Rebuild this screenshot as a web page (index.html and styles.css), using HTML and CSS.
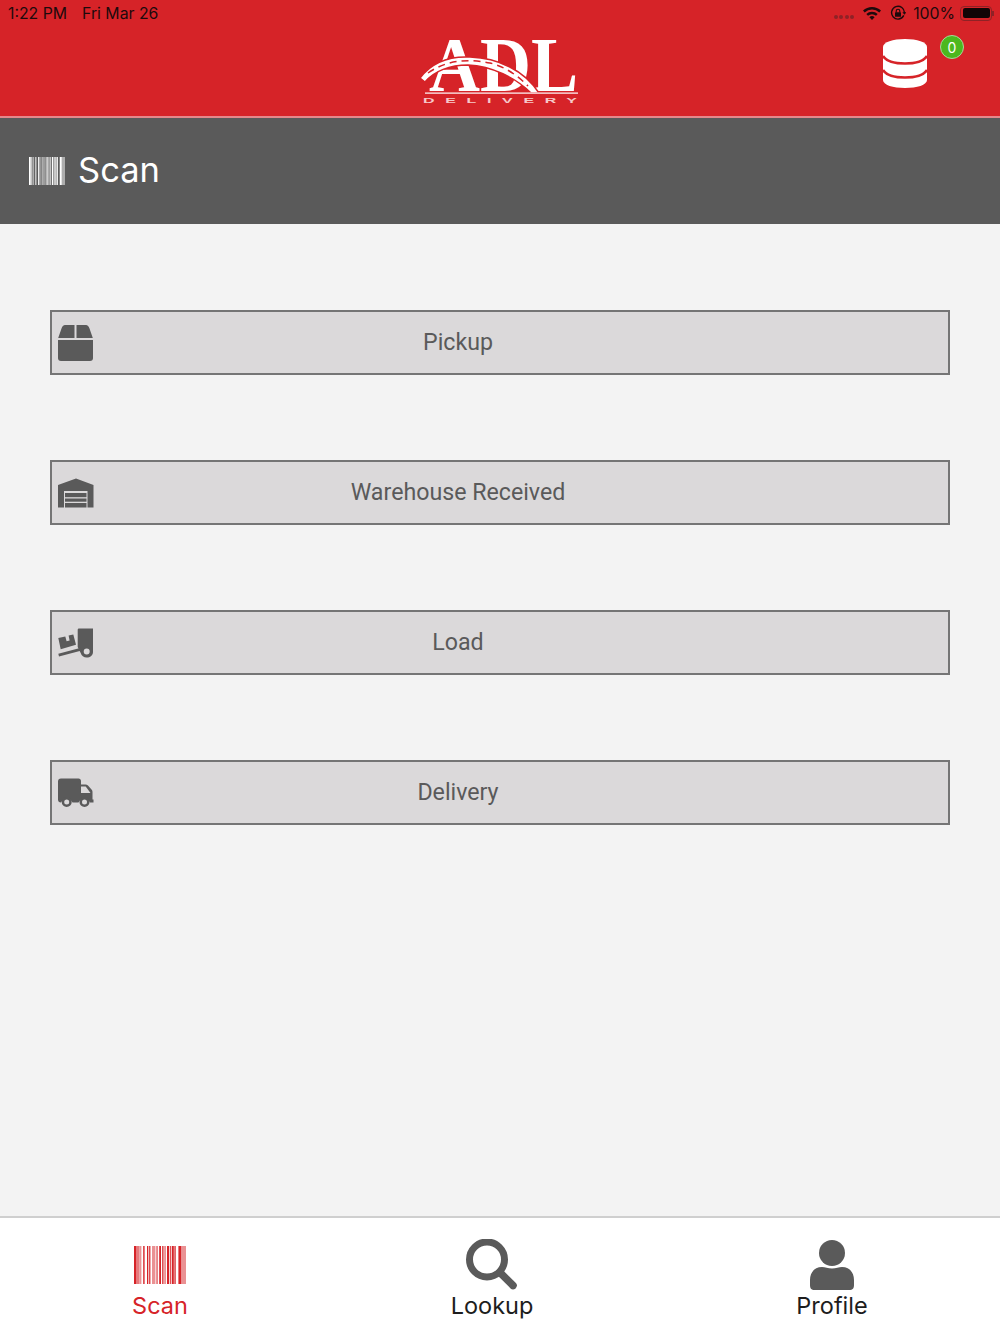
FILE: index.html
```html
<!DOCTYPE html>
<html lang="en">
<head>
    <meta charset="UTF-8">
    <meta name="viewport" content="width=device-width, initial-scale=1.0">
    <title>Scan</title>
    <link rel="stylesheet" href="styles.css">
</head>
<body>
    <svg class="defs" width="0" height="0">
        <symbol id="barcode" viewBox="0 0 52 38" preserveAspectRatio="none">
            <rect x="0" width="2.600" height="38"/>
            <rect x="3.400" width="1.200" height="38"/>
            <rect x="5.200" width="2.200" height="38" opacity=".5"/>
            <rect x="9.200" width="1.400" height="38"/>
            <rect x="13" width="1.300" height="38"/>
            <rect x="15.200" width="1.200" height="38"/>
            <rect x="18" width="3.400" height="38" opacity=".5"/>
            <rect x="22.400" width="1.300" height="38" opacity=".8"/>
            <rect x="25.200" width="1.800" height="38"/>
            <rect x="28.200" width="1.300" height="38"/>
            <rect x="30.400" width="1.300" height="38" opacity=".7"/>
            <rect x="33" width="2.200" height="38"/>
            <rect x="36" width="1.300" height="38" opacity=".8"/>
            <rect x="38" width="1.800" height="38"/>
            <rect x="40.400" width="1.300" height="38"/>
            <rect x="44.400" width="3" height="38"/>
            <rect x="47.600" width="4.400" height="38" opacity=".5"/>
        </symbol>
    </svg>

    <div class="app">
        <header class="top-bar">
            <div class="status-bar">
                <div class="status-left">
                    <span>1:22 PM</span>
                    <span>Fri Mar 26</span>
                </div>
                <div class="status-right">
                    <span class="signal-dots"><i></i><i></i><i></i><i></i></span>
                    <svg class="wifi" viewBox="0 0 18 14" width="18" height="14">
                        <path d="M0 4.600a13 13 0 0 1 18 0l-1.700 1.800a10.600 10.600 0 0 0-14.600 0z"/>
                        <path d="M3.300 8a8.300 8.300 0 0 1 11.400 0L13 9.800a5.900 5.900 0 0 0-8 0z"/>
                        <path d="M6.400 11.200a3.800 3.800 0 0 1 5.200 0L9 14z"/>
                    </svg>
                    <svg class="rotation-lock" viewBox="0 0 16 16" width="16" height="16">
                        <path d="M13.800 10.400A6.400 6.400 0 1 1 14.400 8" fill="none" stroke="#1d0a0c" stroke-width="1.400"/>
                        <path d="M12.400 7.200h4l-2 2.600z" fill="#1d0a0c"/>
                        <rect x="5" y="7.200" width="6" height="4.600" rx=".6" fill="#1d0a0c"/>
                        <path d="M6.200 7.400V6a1.800 1.800 0 0 1 3.600 0v1.400" fill="none" stroke="#1d0a0c" stroke-width="1.100"/>
                    </svg>
                    <span class="battery-pct">100%</span>
                    <span class="battery"><i></i></span>
                </div>
            </div>
            <div class="brand-row">
                <svg class="logo" viewBox="0 0 160 70" width="160" height="70">
                    <text class="logo-letters" x="9" y="55" textLength="149" lengthAdjust="spacingAndGlyphs">ADL</text>
                    <path class="road" d="M0 42C12 26 30 20 50 21C78 22 104 34 119 57L111 57C96 42 72 30 48 29C30 29 14 35 5 46Z"/>
                    <path class="road-dash" d="M8 37C28 23 50 23 70 27C86 31 98 40 108 50"/>
                    <rect class="logo-rule" x="5" y="56.500" width="153" height="1.200"/>
                    <text class="logo-sub" transform="scale(2 1)" x="1.500" y="67.500" textLength="77">DELIVERY</text>
                </svg>
                <div class="sync">
                    <svg class="db-icon" viewBox="0 0 44 49" width="44" height="49">
                        <path d="M0 8C0 3 10 0 22 0s22 3 22 8v33c0 5-10 8-22 8S0 46 0 41z"/>
                        <path class="db-line" d="M0 17c3 5 12 7.500 22 7.500S41 22 44 17"/>
                        <path class="db-line" d="M0 31c3 5 12 7.500 22 7.500S41 36 44 31"/>
                    </svg>
                    <span class="badge">0</span>
                </div>
            </div>
        </header>

        <div class="page-title">
            <svg class="title-icon" width="36" height="28"><use href="#barcode"/></svg>
            <h1>Scan</h1>
        </div>

        <main class="actions">
            <button class="action-btn">
                <svg class="action-icon" viewBox="0 0 36 36">
                    <path d="M7 0h9.500v13H0.200L3.500 3.500C4.200 1.200 5.500 0 7 0z"/>
                    <path d="M18.500 0H28c1.500 0 2.800 1.200 3.500 3.500l3.300 9.500H18.500z"/>
                    <path d="M0 15h35v18c0 2-1 3-3 3H3c-2 0-3-1-3-3z"/>
                </svg>
                <span class="action-label">Pickup</span>
            </button>
            <button class="action-btn">
                <svg class="action-icon" viewBox="0 0 36 36">
                    <path d="M0 10L18 3.500l17.500 6.500v22.500H29.500V16H6v16.500H0z"/>
                    <rect x="7" y="18" width="21.500" height="4.200"/>
                    <rect x="7" y="23.500" width="21.500" height="3.200"/>
                    <rect x="7" y="28" width="21.500" height="4.500"/>
                </svg>
                <span class="action-label">Warehouse Received</span>
            </button>
            <button class="action-btn">
                <svg class="action-icon" viewBox="0 0 36 36">
                    <path fill-rule="evenodd" d="M21 3.500h14v23.500c0 3.500-2.800 5.500-6.300 5.500c-3 0-5.200-1.800-5.900-4.200L19.700 22V5c0-1 .4-1.500 1.300-1.500zM28.700 23.500a3 3 0 1 0 0 6a3 3 0 0 0 0-6z"/>
                    <path d="M.3 28.800L23 22.800l.7 2.700L1 31.500z"/>
                    <path d="M.3 13l7-1.500 1.300 4.700 3-.7-1-5L15.300 9.500 18 19.800 2.700 24.200z"/>
                </svg>
                <span class="action-label">Load</span>
            </button>
            <button class="action-btn">
                <svg class="action-icon" viewBox="0 0 36 36">
                    <path fill-rule="evenodd" d="M3 3.500h17.500c1.500 0 2.500 1 2.500 2.500v3.500h4.500c1 0 1.800.4 2.500 1l3.500 3.900c.6.7 1 1.500 1 2.400v7.700h1v3h-3.500a6.500 6.500 0 0 0-11.500 0H14.500a6.500 6.500 0 0 0-11.500 0c-2 0-3-1-3-3V6.500c0-2 1-3 3-3zM23 11.500v6.500h9.500l-4.800-6.500z"/>
                    <path fill-rule="evenodd" d="M8.700 22a5 5 0 1 0 0 10a5 5 0 0 0 0-10zm0 2.500a2.500 2.500 0 1 1 0 5a2.500 2.500 0 0 1 0-5z"/>
                    <path fill-rule="evenodd" d="M26.500 22a5 5 0 1 0 0 10a5 5 0 0 0 0-10zm0 2.500a2.500 2.500 0 1 1 0 5a2.500 2.500 0 0 1 0-5z"/>
                </svg>
                <span class="action-label">Delivery</span>
            </button>
        </main>

        <nav class="tab-bar">
            <a class="tab tab-active">
                <svg class="tab-barcode" width="52" height="38"><use href="#barcode"/></svg>
                <span>Scan</span>
            </a>
            <a class="tab">
                <svg class="tab-icon" viewBox="0 0 52 52" width="52" height="52">
                    <circle cx="21" cy="20.500" r="17.500" fill="none" stroke="#5a5a5a" stroke-width="7"/>
                    <path d="M34 33.500l13 13" fill="none" stroke="#5a5a5a" stroke-width="7.500" stroke-linecap="round"/>
                </svg>
                <span>Lookup</span>
            </a>
            <a class="tab">
                <svg class="tab-icon" viewBox="0 0 52 52" width="52" height="52">
                    <circle cx="26" cy="14" r="13" fill="#5a5a5a"/>
                    <path d="M4 41c0-8 5-13 12-13c3 0 6 1.500 10 1.500s7-1.500 10-1.500c7 0 12 5 12 13v5c0 3-1 5-5 5H9c-4 0-5-2-5-5z" fill="#5a5a5a"/>
                </svg>
                <span>Profile</span>
            </a>
        </nav>
    </div>
</body>
</html>
```

FILE: styles.css
```css
* { box-sizing: border-box; }
html, body { height: 100%; }
body { margin: 0; font-family: Inter, Roboto, "Liberation Sans", sans-serif; background: #f3f3f3; color: #1d1d1d; }
.defs { position: absolute; }
.app { height: 1334px; display: flex; flex-direction: column; overflow: hidden; }

.top-bar { height: 118px; background: #d62328; border-bottom: 2px solid #e4888b; }
.status-bar { height: 26px; padding: 0 8px; display: flex; justify-content: space-between; align-items: center; font-size: 15.800px; color: #1d0a0c; }
.status-left { display: flex; gap: 15px; }
.status-right { display: flex; align-items: center; }
.signal-dots { display: flex; gap: 1.500px; margin-right: 9px; margin-top: 7px; }
.signal-dots i { width: 4px; height: 4px; border-radius: 50%; background: #8e2226; }
.wifi { fill: #1d0a0c; margin-right: 9px; }
.rotation-lock { margin-right: 7px; }
.battery-pct { margin-right: 5px; }
.battery { width: 32px; height: 15px; border: 1px solid #8e2226; border-radius: 4px; padding: 1.500px; display: block; position: relative; }
.battery i { display: block; height: 100%; background: #120506; border-radius: 2px; }
.battery::after { content: ""; position: absolute; right: -3px; top: 4px; width: 2px; height: 5px; background: #8e2226; }

.brand-row { height: 90px; display: grid; grid-template-columns: 1fr 160px 1fr; padding-top: 10px; }
.logo { grid-column: 2; display: block; overflow: visible; }
.logo-letters { font-family: "Liberation Serif", serif; font-weight: 700; font-size: 79px; fill: #fff; }
.road { fill: #fff; stroke: #d62328; stroke-width: 1.500; }
.road-dash { fill: none; stroke: #d62328; stroke-width: 1.500; stroke-dasharray: 7 5; }
.logo-rule { fill: #fff; }
.logo-sub { font-family: "Liberation Sans", sans-serif; font-weight: 700; font-size: 8px; fill: #f6c9ca; }
.sync { grid-column: 3; position: relative; margin-left: 303px; padding-top: 3px; width: 44px; }
.db-icon { display: block; fill: #fff; }
.db-line { fill: none; stroke: #d62328; stroke-width: 2.500; }
.badge { position: absolute; left: 57px; top: -1px; width: 24px; height: 24px; border-radius: 50%; background: #4cb81e; border: 1px solid #a8d99a; color: #fff; font-size: 14px; display: flex; align-items: center; justify-content: center; }

.page-title { height: 106px; background: #5a5a5a; color: #fff; display: flex; align-items: center; gap: 13px; padding: 0 0 2px 29px; }
.page-title h1 { margin: 0 0 1px; font-size: 34.500px; font-weight: 400; }
.title-icon { fill: #fff; display: block; margin-top: 1px; }

.actions { flex: 1; padding: 86px 50px 0; display: flex; flex-direction: column; gap: 85px; }
.action-btn { height: 65px; background: #dbd9da; border: 2px solid #757575; padding: 0 0 0 6px; display: flex; align-items: center; font-family: Roboto, sans-serif; font-size: 23.200px; color: #5a5a5a; }
.action-icon { width: 36px; height: 36px; fill: #5a5a5a; flex: none; }
.action-label { width: 728px; text-align: center; margin-bottom: 2px; }

.tab-bar { height: 118px; background: #fff; border-top: 2px solid #cfcfcf; display: grid; grid-template-columns: 320px 344px 336px; }
.tab { display: flex; flex-direction: column; align-items: center; justify-content: flex-start; font-size: 23.500px; color: #1d1d1d; padding-top: 21px; line-height: 30px; }
.tab-icon { display: block; height: 52px; }
.tab-barcode { display: block; fill: #d62328; margin: 7px 0; }
.tab-active { color: #d62328; }
```
